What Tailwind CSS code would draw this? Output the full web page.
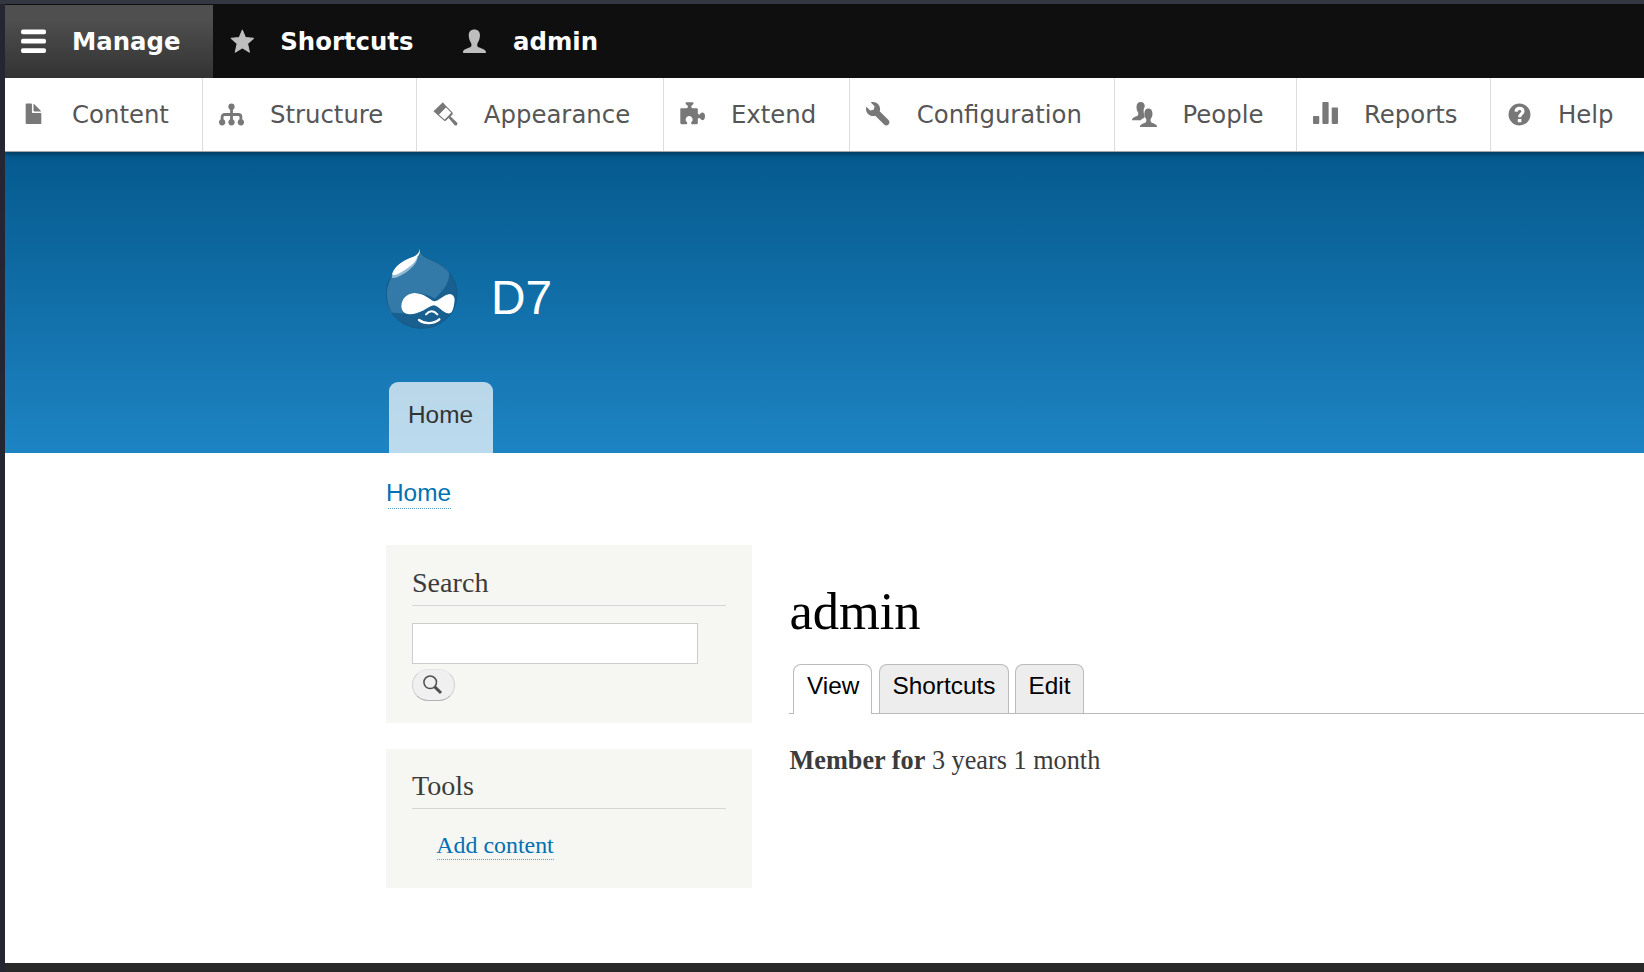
<!DOCTYPE html>
<html lang="en">
<head>
<meta charset="utf-8">
<title>admin | D7</title>
<script src="https://cdn.jsdelivr.net/npm/@tailwindcss/browser@4"></script>
</head>
<body class="h-[972px] w-[1644px] overflow-hidden bg-[#292929]">
<div class="flex h-full w-full flex-col">
<div class="h-[4px] shrink-0 bg-[#34373f]"></div>
<div class="flex min-h-0 flex-1">
<div class="w-[5px] shrink-0 bg-[#242731]"></div>
<div class="flex h-[959px] min-w-0 flex-1 flex-col overflow-hidden bg-white">

  <!-- Toolbar bar -->
  <nav class="relative z-20 flex h-[74px] shrink-0 bg-[#0f0f0f] pt-px font-['DejaVu_Sans'] text-[24.375px] leading-[73px] font-bold text-white">
    <a class="flex h-[73px] w-[208px] shrink-0 items-center bg-linear-to-b from-[#4f4f4f] from-20% to-[#333] pl-[16.25px]">
      <svg class="mr-[25.8px] size-[25px] shrink-0" viewBox="0 0 16 16" fill="#fff"><rect y="0.3" width="16" height="3" rx="1.2"/><rect y="6.3" width="16" height="3" rx="1.2"/><rect y="12.3" width="16" height="3" rx="1.2"/></svg>
      Manage</a>
    <a class="flex shrink-0 items-center pr-[32.5px] pl-[16.5px]">
      <svg class="mr-[25.8px] size-[25px] shrink-0" viewBox="0 0 16 16" fill="#bebebe" stroke="#bebebe" stroke-width=".7" stroke-linejoin="round"><path d="M7.9.8 9.9 5.500 15 6 11.200 9.400 12.400 14.800 7.900 12 3.400 14.800 4.600 9.400.8 6 5.900 5.500z"/></svg>
      Shortcuts</a>
    <a class="flex shrink-0 items-center pr-[32.5px] pl-[16.25px]">
      <svg class="mr-[25.8px] size-[25px] shrink-0" viewBox="0 0 16 16" fill="#bebebe"><path d="M.6 14.900C.5 13.400 2.200 12.600 5.300 11.600 6.200 11.200 6.200 10 5.800 8.900 4.800 7.700 4.300 5.700 4.300 4 4.300 1.600 5.700.3 7.900.3S11.500 1.600 11.500 4C11.500 5.700 11 7.700 10 8.900 9.600 10 9.600 11.200 10.500 11.600 13.600 12.600 15.400 13.400 15.400 14.900 15.400 15.200 15.200 15.400 14.900 15.400H1.100C.8 15.400.6 15.200.6 14.900z"/></svg>
      admin</a>
  </nav>

  <!-- Administration menu -->
  <nav class="relative z-10 flex h-[74px] shrink-0 border-b border-[#a6a6a6] bg-white font-['DejaVu_Sans'] text-[24.375px] leading-[73px] text-[#565656] shadow-[0_1px_5px_1px_rgba(0,0,0,0.4)]">
    <a class="flex shrink-0 items-center border-r border-[#ddd] pr-[33px] pl-[16.25px]">
      <svg class="mr-[25.8px] size-[25px] shrink-0" viewBox="0 0 16 16" fill="#787878"><path d="M12.502 7h-5c-.276 0-.502-.225-.502-.5v-5c0-.275-.225-.5-.5-.5h-3c-.275 0-.5.225-.5.5v12.029c0 .275.225.5.5.5h9c.275 0 .5-.225.5-.5v-6.029c0-.275-.225-.5-.498-.5zM8.502 6h4c.275 0 .34-.159.146-.354l-4.293-4.292c-.195-.195-.353-.129-.353.146v4c0 .275.225.5.5.5z"/></svg>
      Content</a>
    <a class="flex shrink-0 items-center border-r border-[#ddd] pr-[32.5px] pl-[16.25px]">
      <svg class="mr-[25.8px] size-[25px] shrink-0" viewBox="0 0 16 16" fill="#787878"><circle cx="8" cy="3" r="2"/><circle cx="2" cy="13" r="2"/><circle cx="8" cy="13" r="2"/><circle cx="14" cy="13" r="2"/><path d="M2 13V9.600Q2 8 3.600 8H12.400Q14 8 14 9.600V13M8 3V13" fill="none" stroke="#787878" stroke-width="1.800"/></svg>
      Structure</a>
    <a class="flex shrink-0 items-center border-r border-[#ddd] pr-[32.5px] pl-[16.25px]">
      <svg class="mr-[25.8px] size-[25px] shrink-0" viewBox="0 0 16 16" fill="#787878"><path d="M6.300.1 .3 5.900 3.200 8.500 8.600 2.900z"/><path d="M8.300 2.900 12.200 6.900 7.500 11.800 3.300 8.100z" fill="none" stroke="#787878" stroke-width=".7"/><path d="M11.900 6.700 9.900 9 7.300 11.700 8 12.100 10 10.300 13.700 14.700Q14.700 15.500 15.400 14.700 16 13.800 15.200 13L11.200 9.200 12.800 7.600z"/></svg>
      Appearance</a>
    <a class="flex shrink-0 items-center border-r border-[#ddd] pr-[32.5px] pl-[16.5px]">
      <svg class="mr-[25.8px] size-[25px] shrink-0" viewBox="0 0 16 16" fill="#787878"><path d="M.4 4H4.200Q5.200 3.700 5.100 2.600L3.600 1.200Q3.400.2 4 .1H8.200Q8.900.2 8.600 1.200L7.200 2.600Q7.100 3.700 8 4H10.700Q11.400 4 11.400 4.700V7.400Q11.700 8.200 12.600 8 13.400 6.500 14.600 6.700 16 7 16 9.100T14.600 11.600Q13.400 11.700 12.600 10.300 11.700 10 11.400 10.700V13.500Q11.400 14.200 10.700 14.200H7.600Q6.800 13.900 7.200 12.900 8.200 12.200 8.100 11 7.700 9 5.900 8.900 4 9 3.600 11 3.500 12.200 4.500 12.900 5 13.900 4.100 14.200H.9Q.2 14.200.2 13.500V4.500z"/></svg>
      Extend</a>
    <a class="flex shrink-0 items-center border-r border-[#ddd] pr-[32.5px] pl-[16.25px]">
      <svg class="mr-[25.8px] size-[25px] shrink-0" viewBox="0 0 16 16" fill="#787878"><path d="M14.416 11.586l-.01-.008v-.001l-5.656-5.656c.15-.449.252-.921.252-1.421 0-2.485-2.016-4.500-4.502-4.500-.505 0-.981.102-1.434.255l2.431 2.431-.588 2.196-2.196.588-2.445-2.445c-.162.464-.268.956-.268 1.475 0 2.486 2.014 4.500 4.500 4.500.5 0 .972-.102 1.421-.251l5.667 5.665c.781.781 2.047.781 2.828 0s.781-2.047 0-2.828z"/></svg>
      Configuration</a>
    <a class="flex shrink-0 items-center border-r border-[#ddd] pr-[32.5px] pl-[16.25px]">
      <svg class="mr-[25.8px] size-[25px] shrink-0" viewBox="0 0 16 16" fill="#787878"><path d="M0 11.500C0 10.300 1.200 9.800 3.300 9 4.200 8.400 4.100 7.200 3.800 6.400 3.100 5.500 2.900 4.500 2.900 3.200 2.900 1.100 3.900 0 5.600 0S8.200 1.200 8.200 3.100C7.300 4.200 7.200 6.300 7.800 8.100 8.100 9 8.300 9.700 7.600 10.200 6.700 10.600 6 11 5.600 11.700H.2Q0 11.700 0 11.500z"/><path d="M5.100 15.700C5.100 14.400 6.300 14 8.500 13.200 9.400 12.500 9.300 11.400 8.900 10.600 8.200 9.700 7.900 8.700 7.900 7.500 7.900 5.400 8.900 4.200 10.500 4.200S13.100 5.400 13.100 7.500C13.100 8.700 12.800 9.700 12.100 10.600 11.700 11.400 11.700 12.500 12.600 13.200 14.800 14 16 14.400 16 15.700V16H5.100z"/></svg>
      People</a>
    <a class="flex shrink-0 items-center border-r border-[#ddd] pr-[32.5px] pl-[16.25px]">
      <svg class="mr-[25.8px] size-[25px] shrink-0" viewBox="0 0 16 16" fill="#787878"><rect y="9" width="4" height="5" rx=".5"/><rect x="6" width="4" height="14" rx=".5"/><rect x="12" y="3.500" width="4" height="10.500" rx=".5"/></svg>
      Reports</a>
    <a class="flex shrink-0 items-center pr-[32.5px] pl-[16.25px]">
      <svg class="mr-[25.8px] size-[25px] shrink-0" viewBox="0 0 16 16"><circle cx="8" cy="8" r="7" fill="#787878"/><path d="M5.800 6.100C5.900 4.700 6.700 4.100 8 4.100S10.200 4.800 10.200 6C10.200 7.600 8.100 7.700 8.100 9.700" fill="none" stroke="#fff" stroke-width="2"/><rect x="6.900" y="10.800" width="2.300" height="2.200" rx=".4" fill="#fff"/></svg>
      Help</a>
  </nav>

  <!-- Site header -->
  <header class="flex h-[301px] shrink-0 flex-col justify-between bg-linear-to-b from-[#055a8e] to-[#1d84c3] pl-[381px]">
    <div class="flex pt-[96px]">
      <svg class="h-[81px] w-[72px]" viewBox="48 56 216 243">
        <path d="M149 57C151 76 162 83 184 92 225 109 261 143 261 193 261 253 213 297 155 297S49 253 49 193C49 157 66 134 91 111 114 90 145 82 149 57z" fill="#195f8f"/>
        <path d="M149 57C151 76 162 83 184 92 208 102 225 112 237 127 240 164 216 187 194 208 178 198 156 190 133 191 105 194 93 211 94 234 95 245 98 249 101 253 83 249 67 250 61 250 46 214 45 170 68 140 91 105 145 82 149 57z" fill="#347aa8"/>
        <path d="M149 57C151 76 162 83 184 92 225 109 261 143 261 193 261 253 213 297 155 297S49 253 49 193C49 157 66 134 91 111 114 90 145 82 149 57z" fill="none" stroke="#145681" stroke-width="2"/>
        <path d="M65 145Q72 148 83 143C107 132 138 111 143 85L150 66 142 79 66 137z" fill="#92bad4"/>
        <path d="M149 57C148 72 142 76 130 82 103 92 75 107 66 134 69 140 79 137 91 130 113 117 139 101 142 81 149 76 150 68 149 57z" fill="#fff"/>
        <path d="M133 191C165 192 178 211 192 216 207 216 221 195 240 194 252 196 256 207 253 220 250 239 247 254 233 252 218 250 207 231 191 228 172 233 151 255 119 255 101 254 94 243 94 230 95 208 110 193 133 191z" fill="#fff"/>
        <path d="M168 255Q185 237 202 255" fill="none" stroke="#fff" stroke-width="6" stroke-linecap="round"/>
        <path d="M147 272C162 284 190 285 208 270" fill="none" stroke="#fff" stroke-width="7" stroke-linecap="round"/>
      </svg>
      <div class="mt-[20px] ml-[33px] font-['Liberation_Sans'] text-[47.8px] leading-[60px] text-white">D7</div>
    </div>
    <div class="ml-[3px] h-[71px] w-[104px] rounded-t-[9px] bg-white/70 pl-[19px] font-['Liberation_Sans'] text-[24.375px] leading-[65px] text-[#333]">Home</div>
  </header>

  <div class="h-[92px] shrink-0 pt-[22px] pl-[383px] font-['Liberation_Sans'] text-[24.375px]">
    <a class="block h-[34px] w-[63px] border-b border-dotted border-[#55a0cd] leading-[36px] text-[#0071b3]"><span class="-ml-[2px]">Home</span></a>
  </div>

  <div class="flex pl-[381px] font-['Liberation_Serif'] text-[#3b3b3b]">
    <aside class="flex w-[366px] shrink-0 flex-col gap-[26px]">
      <section class="h-[178px] bg-[#f6f6f2] px-[26px] pt-[19px]">
        <h2 class="h-[42px] border-b border-[#d6d6d6] text-[28.1px] leading-[37px]">Search</h2>
        <input class="mt-[17px] block h-[41px] w-[286px] border border-[#ccc] bg-white" aria-label="Search">
        <button class="mt-[5px] flex h-[32px] w-[43px] items-center rounded-[16px] border border-t-[#e4e4e4] border-r-[#d2d2d2] border-b-[#b4b4b4] border-l-[#d2d2d2] bg-[#f0f0f0] pl-[10px]" aria-label="Search">
          <svg class="h-[20px] w-[20px]" viewBox="0 0 20 20" fill="none" stroke="#505050"><circle cx="7.200" cy="7.300" r="6.300" stroke-width="1.500"/><path d="M11.500 11.700 18 18" stroke-width="3"/></svg>
        </button>
      </section>
      <section class="h-[139px] bg-[#f6f6f2] px-[26px] pt-[18px]">
        <h2 class="h-[42px] border-b border-[#d6d6d6] text-[28.1px] leading-[37px]">Tools</h2>
        <a class="mt-[20px] ml-[25px] block h-[31px] w-[117px] border-b border-dotted border-[#55a0cd] text-[23.9px] leading-[33px] whitespace-nowrap text-[#0071b3]"><span class="-ml-[0.7px]">Add content</span></a>
      </section>
    </aside>
    <main class="ml-[37px] min-w-0 flex-1">
      <h1 class="mt-[36px] pl-[0.4px] text-[52.5px] leading-[60px] text-black">admin</h1>
      <div class="mt-[23px] flex h-[50px] items-stretch border-b border-[#bbb] pl-[4px] font-['Liberation_Sans'] text-[24.375px] leading-[42px] text-black">
        <a class="-mb-px w-[79px] rounded-t-[8px] border border-b-0 border-[#bbb] bg-white pl-[13px]">View</a>
        <a class="ml-[7px] w-[130px] rounded-t-[8px] border border-b-0 border-[#bbb] bg-[#ededed] pl-[12.5px]">Shortcuts</a>
        <a class="ml-[6px] w-[69px] rounded-t-[8px] border border-b-0 border-[#bbb] bg-[#ededed] pl-[12.5px]">Edit</a>
      </div>
      <p class="mt-[27px] pl-[0.5px] text-[26.25px] leading-[40px]"><b>Member for</b> 3 years 1 month</p>
    </main>
  </div>
</div>
</div>
</div>
</body>
</html>
